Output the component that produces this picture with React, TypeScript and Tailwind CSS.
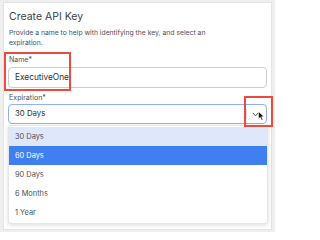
import React from 'react';

const options = ['30 Days', '60 Days', '90 Days', '6 Months', '1 Year'];

export default function App() {
  return (
    <div
      className="relative w-[275px] h-[232px] overflow-hidden bg-[#efefef] pt-[2px] pl-[3px]"
      style={{ fontFamily: 'Inter, "Noto Sans", sans-serif' }}
    >
      {/* modal */}
      <div className="w-[269px] h-[228px] bg-white border border-[#e3e3e3] px-[4px] pt-[7px]">
        <h2 className="ml-[1px] text-[10.5px] leading-[14px] text-[#3b3f45]">Create API Key</h2>
        <p className="ml-[1px] mt-[4px] text-[6.8px] leading-[10px] text-[#4b5058]">
          Provide a name to help with identifying the key, and select an
          <br />
          expiration.
        </p>

        <label className="block ml-[1px] mt-[7px] text-[7px] leading-[10px] text-[#4b5058]">Name*</label>
        <div className="mt-[2px] h-[21px] w-[259px] rounded-[4px] border border-[#c9ccd1] flex items-center pl-[6px] text-[8.3px] text-[#2c3036]">
          ExecutiveOne
        </div>

        <label className="block ml-[1px] mt-[5px] text-[7.1px] leading-[10px] text-[#4b5058]">Expiration*</label>
        <div className="mt-[1px] h-[20px] w-[259px] rounded-[4px] border border-[#8fb0f3] flex items-center pl-[6px] pr-[6px] text-[7.8px] text-[#2c3036]">
          <span className="flex-1">30 Days</span>
          <span className="h-[10px] w-px bg-[#dcdcdc] mr-[5px]" />
          <svg width="7" height="5" viewBox="0 0 7 5" className="mr-[1px]">
            <path d="M0.8 1 L3.5 3.8 L6.2 1" fill="none" stroke="#444" strokeWidth="1" />
          </svg>
        </div>
      </div>

      {/* dropdown menu */}
      <div className="absolute left-[8px] top-[125px] w-[260px] h-[99px] bg-white rounded-[3px] border border-[#e6e6e6] shadow-[0_1px_4px_rgba(0,0,0,0.15)] pt-[1px]">
        {options.map((o, i) => (
          <div
            key={o}
            className={
              i === 0
                ? 'h-[19px] flex items-center pl-[6px] text-[7.4px] bg-[#dfe8fb] text-[#4b5058]'
                : i === 1
                ? 'h-[19px] flex items-center pl-[6px] text-[7.4px] bg-[#3f7fef] text-white'
                : 'h-[19px] flex items-center pl-[6px] text-[7.4px] text-[#4b5058]'
            }
          >
            {o}
          </div>
        ))}
      </div>

      {/* annotation boxes */}
      <div className="absolute left-[4px] top-[52px] w-[67px] h-[39px] border-2 border-[#ec4a3f]" />
      <div className="absolute left-[244px] top-[96px] w-[29px] h-[31px] border-2 border-[#ec4a3f]" />

      {/* mouse cursor */}
      <svg className="absolute left-[258px] top-[111px]" width="7" height="10" viewBox="0 0 7 10">
        <path d="M0.5 0.5 L0.5 8 L2.3 6.3 L3.6 9.3 L4.9 8.7 L3.6 5.8 L6 5.8 Z" fill="#111" stroke="#fff" strokeWidth="0.6" />
      </svg>
    </div>
  );
}
